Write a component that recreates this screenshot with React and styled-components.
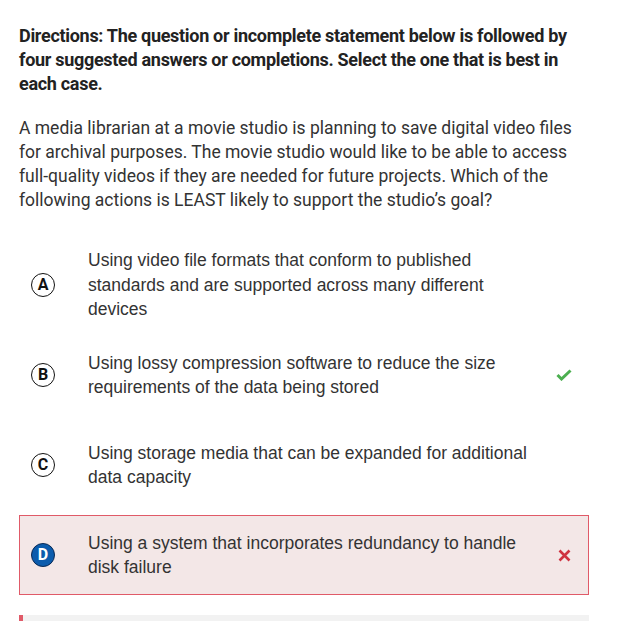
import React from "react";
import styled, { createGlobalStyle } from "styled-components";

const GlobalStyle = createGlobalStyle`
  body {
    margin: 0;
    background: #fff;
  }
`;

const Page = styled.div`
  width: 570px;
  padding: 24px 19px 0;
`;

const Directions = styled.p`
  margin: 0;
  font-family: Roboto, "Liberation Sans", sans-serif;
  font-weight: 700;
  font-size: 18px;
  letter-spacing: -0.3px;
  line-height: 24px;
  color: #222;
`;

const Stem = styled.p`
  margin: 20px 0 0;
  font-family: Roboto, "Liberation Sans", sans-serif;
  font-size: 17.5px;
  line-height: 24px;
  color: #333;
`;

const Options = styled.div`
  margin-top: 33px;
  display: flex;
  flex-direction: column;
  gap: 10px;
`;

const Option = styled.div`
  display: flex;
  align-items: center;
  min-height: 80px;
  box-sizing: border-box;
  padding: 0 16px 0 11px;
  border: 1px solid ${(p) => (p.$wrong ? "#e05a68" : "transparent")};
  background: ${(p) => (p.$wrong ? "#f3e7e7" : "transparent")};
`;

const Letter = styled.span`
  flex: none;
  width: 24px;
  height: 24px;
  border-radius: 50%;
  box-sizing: border-box;
  border: 1.5px solid ${(p) => (p.$selected ? "#0a2a55" : "#111")};
  background: ${(p) => (p.$selected ? "#0b5cad" : "#fff")};
  color: ${(p) => (p.$selected ? "#fff" : "#111")};
  display: flex;
  align-items: center;
  justify-content: center;
  font-family: Roboto, "Liberation Sans", sans-serif;
  font-weight: 700;
  font-size: 16px;
  line-height: 1;
`;

const OptionText = styled.div`
  flex: 1;
  margin-left: 33px;
  max-width: 455px;
  font-family: "Liberation Sans", Arial, sans-serif;
  font-size: 17.5px;
  line-height: 24.5px;
  color: #333;
`;

const Mark = styled.span`
  flex: none;
  width: 16px;
  display: flex;
  justify-content: center;
  margin-left: auto;
`;

const Progress = styled.div`
  margin-top: 20px;
  height: 8px;
  background: #f2f2f2;
`;

const ProgressFill = styled.div`
  height: 100%;
  background: #e05a68;
`;

const Check = () => (
  <svg width="16" height="12" viewBox="0 0 16 12">
    <path d="M1.5 6 L5.5 10 L14.5 1.5" fill="none" stroke="#4caf50" strokeWidth="3" />
  </svg>
);

const Cross = () => (
  <svg width="13" height="13" viewBox="0 0 13 13">
    <path d="M1.5 1.5 L11.5 11.5 M11.5 1.5 L1.5 11.5" fill="none" stroke="#cf3240" strokeWidth="2.6" />
  </svg>
);

const options = [
  {
    key: "A",
    text: "Using video file formats that conform to published standards and are supported across many different devices",
  },
  {
    key: "B",
    text: "Using lossy compression software to reduce the size requirements of the data being stored",
    mark: "check",
  },
  {
    key: "C",
    text: "Using storage media that can be expanded for additional data capacity",
  },
  {
    key: "D",
    text: "Using a system that incorporates redundancy to handle disk failure",
    mark: "cross",
    selected: true,
  },
];

export default function App() {
  return (
    <>
      <GlobalStyle />
      <Page>
        <Directions>
          Directions: The question or incomplete statement below is followed by
          four suggested answers or completions. Select the one that is best in
          each case.
        </Directions>
        <Stem>
          A media librarian at a movie studio is planning to save digital video
          files for archival purposes. The movie studio would like to be able to
          access full-quality videos if they are needed for future projects.
          Which of the following actions is LEAST likely to support the
          studio’s goal?
        </Stem>
        <Options>
          {options.map((o) => (
            <Option key={o.key} $wrong={o.selected}>
              <Letter $selected={o.selected}>{o.key}</Letter>
              <OptionText>{o.text}</OptionText>
              <Mark>
                {o.mark === "check" && <Check />}
                {o.mark === "cross" && <Cross />}
              </Mark>
            </Option>
          ))}
        </Options>
        <Progress>
          <ProgressFill style={{ width: "4px" }} />
        </Progress>
      </Page>
    </>
  );
}
